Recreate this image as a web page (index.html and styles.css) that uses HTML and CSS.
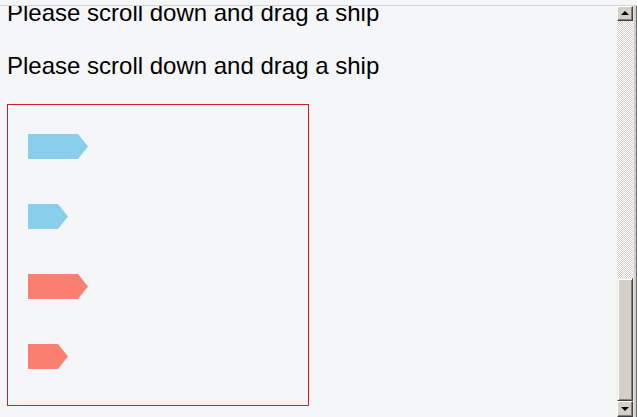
FILE: index.html
```html
<!DOCTYPE html>
<html>
<head>
<meta charset="utf-8">
<link rel="stylesheet" href="styles.css">
</head>
<body>
<div class="topstrip"></div>
<div class="frame">
  <div class="viewport">
    <div class="content">
      <p class="msg">Please scroll down and drag a ship</p>
      <p class="msg">Please scroll down and drag a ship</p>
      <div class="board">
        <div class="ship blue long"></div>
        <div class="ship blue short"></div>
        <div class="ship red long"></div>
        <div class="ship red short"></div>
      </div>
    </div>
  </div>
  <div class="scrollbar">
    <div class="sbtn up"><span class="arrow-up"></span></div>
    <div class="track"></div>
    <div class="thumb"></div>
    <div class="sbtn down"><span class="arrow-down"></span></div>
  </div>
  <div class="edge"></div>
</div>
</body>
</html>
```
FILE: styles.css
```css
html, body {
  margin: 0;
  padding: 0;
  height: 100%;
  overflow: hidden;
  background: #f4f6f8;
}
.topstrip {
  height: 5px;
  background: #f4f6f8;
}
.frame {
  display: flex;
  height: 411px;
  border-top: 1px solid #d3d6d9;
}
.viewport {
  flex: 1;
  overflow: hidden;
}
.content {
  margin-top: -7px;
  padding-left: 7px;
  display: flex;
  flex-direction: column;
  gap: 25px;
}
.msg {
  margin: 0;
  font-family: "Liberation Sans", Arial, sans-serif;
  font-size: 24px;
  line-height: 28px;
  color: #000;
}
.board {
  margin-top: -1px;
  width: 300px;
  height: 300px;
  border: 1px solid #cc1f26;
  box-sizing: content-box;
  display: flex;
  flex-direction: column;
  gap: 45px;
  padding: 29px 0 0 20px;
  box-sizing: border-box;
  width: 302px;
  height: 302px;
}
.ship {
  height: 25px;
  clip-path: polygon(0 0, calc(100% - 10px) 0, 100% 50%, calc(100% - 10px) 100%, 0 100%);
}
.long { width: 60px; }
.short { width: 40px; }
.blue { background: #89cfec; }
.red { background: #fc8072; }

.scrollbar {
  width: 16px;
  display: flex;
  flex-direction: column;
}
.sbtn {
  height: 16px;
  flex: none;
  background: #d4d0c8;
  box-sizing: border-box;
  border-top: 1px solid #ffffff;
  border-left: 1px solid #ffffff;
  border-right: 1px solid #404040;
  border-bottom: 1px solid #404040;
  box-shadow: inset -1px -1px 0 #808080;
  display: flex;
  align-items: center;
  justify-content: center;
}
.sbtn.up { height: 15px; }
.arrow-up {
  width: 0;
  height: 0;
  border-left: 4px solid transparent;
  border-right: 4px solid transparent;
  border-bottom: 4px solid #000;
  margin-bottom: 1px;
}
.arrow-down {
  width: 0;
  height: 0;
  border-left: 4px solid transparent;
  border-right: 4px solid transparent;
  border-top: 4px solid #000;
}
.track {
  height: 257px;
  flex: none;
  background-color: #ffffff;
  background-image: repeating-conic-gradient(#d4d0c8 0 25%, #ffffff 0 50%);
  background-size: 2px 2px;
}
.thumb {
  height: 123px;
  flex: none;
  box-sizing: border-box;
  background: #d4d0c8;
  border-top: 1px solid #ece9e2;
  border-left: 1px solid #ece9e2;
  border-right: 1px solid #404040;
  border-bottom: 1px solid #404040;
  box-shadow: inset 1px 1px 0 #ffffff, inset -1px -1px 0 #808080;
}
.edge {
  width: 4px;
  background: #d4d0c8;
  border-left: 1px solid #e8e8e8;
  border-right: 1px solid #6a6a6a;
  box-sizing: border-box;
}
```
